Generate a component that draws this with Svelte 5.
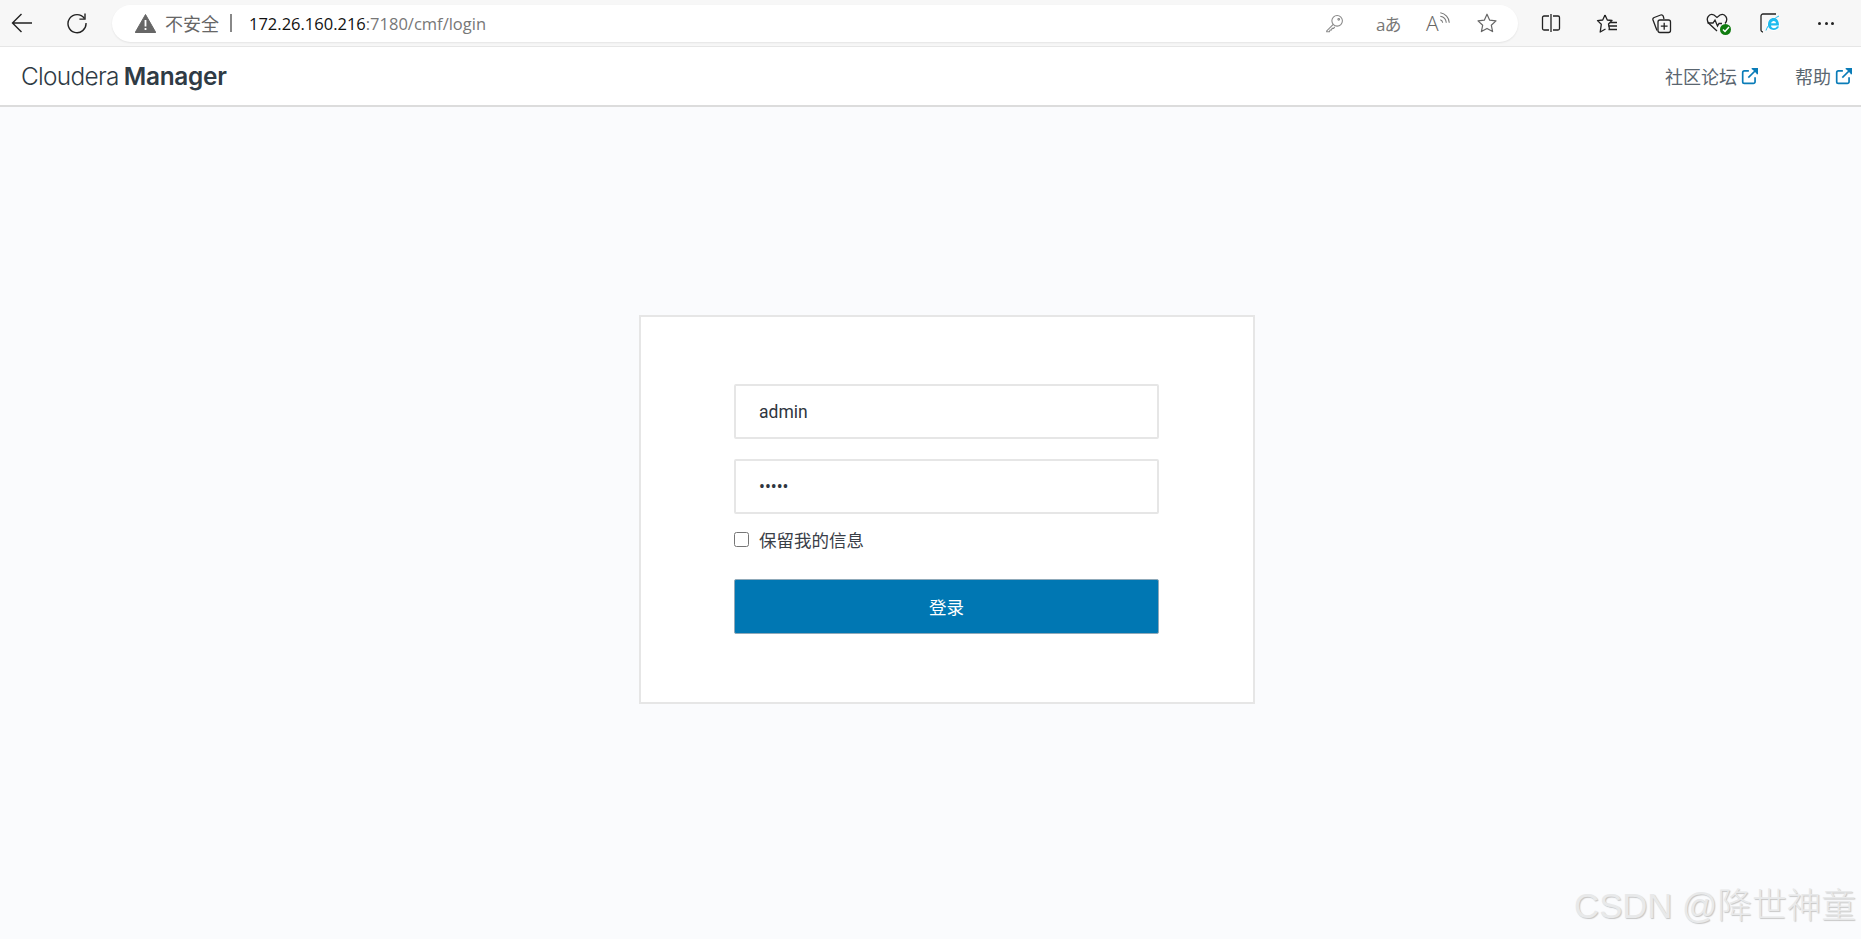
<script lang="ts">
  const links = [
    { label: "社区论坛" },
    { label: "帮助" }
  ];
</script>

<div class="page">
  <div class="browser-bar">
    <button class="nav-btn back" aria-label="back">
      <svg width="22" height="22" viewBox="0 0 22 22" fill="none" stroke="#222" stroke-width="1.4"><path d="M1.5 11H21M10.5 2 1.5 11l9 9" /></svg>
    </button>
    <button class="nav-btn reload" aria-label="reload">
      <svg width="22" height="22" viewBox="0 0 22 22" fill="none" stroke="#222" stroke-width="1.4"><path d="M18.4 6.5A9 9 0 1 0 20 11" /><path d="M19 1.5v5.6h-5.6" /></svg>
    </button>
    <div class="address">
      <svg class="warn" width="21" height="19" viewBox="0 0 21 19"><path d="M10.5 0.5 20.8 18.5H0.2Z" fill="#666" stroke="#666" stroke-linejoin="round" /><rect x="9.6" y="6" width="1.8" height="6.5" fill="#fff" /><rect x="9.6" y="14" width="1.8" height="2" fill="#fff" /></svg>
      <span class="insecure">不安全</span>
      <span class="sep"></span>
      <span class="url"><span class="host">172.26.160.216</span>:7180/cmf/login</span>
      <div class="addr-icons">
        <svg class="key" width="19" height="19" viewBox="0 0 18 18" fill="none" stroke="#888" stroke-width="1"><circle cx="11.5" cy="6.5" r="5" /><path d="M7.8 9.8 1.6 16v.9h2.6l.6-1.7h1.4l.5-1.6h1.5l1-1.4" /><circle cx="13" cy="5" r=".8" /></svg>
        <span class="translate">aあ</span>
        <span class="read">A<svg width="11" height="12" viewBox="0 0 9 10" fill="none" stroke="#777" stroke-width=".9"><path d="M1 6.5a3 3 0 0 1 2 2.500M1 3.500a6 6 0 0 1 5 5.500M1 .7a8.800 8.800 0 0 1 7.500 8.300" /></svg></span>
        <svg width="20" height="20" viewBox="0 0 20 20" fill="none" stroke="#666" stroke-width="1.2" stroke-linejoin="round"><path d="M10 1.200 12.700 7.200 19 7.900 14.300 12.200 15.600 18.600 10 15.400 4.400 18.600 5.700 12.200 1 7.900 7.300 7.200Z" /></svg>
      </div>
    </div>
    <div class="tools">
      <svg class="t-split" width="20" height="20" viewBox="0 0 20 20" fill="none" stroke="#222" stroke-width="1.300"><path d="M8 3H3a1.500 1.500 0 0 0-1.500 1.500v11A1.500 1.500 0 0 0 3 17h5M12 3h5a1.500 1.500 0 0 1 1.500 1.500v11A1.500 1.500 0 0 1 17 17h-5M10 1v18" /></svg>
      <svg class="t-fav" width="22" height="21" viewBox="0 0 22 21" fill="none" stroke="#222" stroke-width="1.300" stroke-linejoin="round"><path d="M9 2 11.300 7 16 7.500 12.500 11 13.500 16M9 2 6.700 7 1.500 7.600 5.300 11.300 4.200 19 9.500 16" /><path d="M14 9.500h7M12.500 13h8.500M12.500 16.500h8.500" /></svg>
      <svg class="t-coll" width="21" height="21" viewBox="0 0 21 21" fill="none" stroke="#222" stroke-width="1.300"><path d="M6 17.500 2 7a2 2 0 0 1 1.200-2.500l6.500-2.500a2 2 0 0 1 2.500 1L13 6" /><rect x="7" y="7" width="12.500" height="12.500" rx="2" /><path d="M13.200 9.800v7M9.800 13.200h6.800" /></svg>
      <div class="t-health">
        <svg width="22" height="20" viewBox="0 0 22 20" fill="none" stroke="#222" stroke-width="1.300"><path d="M11 18 3 10.500C-1 6 3-.5 8 2l3 2.500L14 2c5-2.500 9 4 5 8.500" /><path d="M1.500 10H7l2-3 2.500 6 1.500-2.500h3" /></svg>
        <span class="health-ok"><svg width="8" height="7" viewBox="0 0 8 7" fill="none" stroke="#fff" stroke-width="1.500"><path d="M1 3.500 3 5.500 7 1" /></svg></span>
      </div>
      <div class="t-ie">
        <svg width="22" height="22" viewBox="0 0 22 22" fill="none"><path d="M3 20H3a2 2 0 0 1-2-2V4a2 2 0 0 1 2-2h13" stroke="#222" stroke-width="1.300" /><circle cx="13.500" cy="12.500" r="6.500" fill="#fff" /><path d="M8 12.500c0-4 2.500-6.500 5.600-6.500 3.300 0 5.400 2.500 5.400 7.500h-8c.2 3.500 5 3.500 6 .8l2 .2c-1.200 4.500-11 5.200-11-2zm3-1.200h5c-.2-3-4.700-3-5 0z" fill="#1ebbee" /><path d="M6 18.500c1-4 7-12 13-14.500" stroke="#1ebbee" stroke-width="1" /></svg>
      </div>
      <div class="t-more"><i></i><i></i><i></i></div>
    </div>
  </div>

  <header class="app-header">
    <div class="brand">Cloudera <strong>Manager</strong></div>
    <nav class="links">
      {#each links as link}
        <a href="#top">
          {link.label}
          <svg width="18" height="18" viewBox="0 0 16 16" fill="none" stroke="#0a7cb8" stroke-width="1.500"><path d="M12.500 9v4a1.500 1.500 0 0 1-1.500 1.500H3A1.500 1.500 0 0 1 1.500 13V5A1.500 1.500 0 0 1 3 3.500h4" /><path d="M6.500 9.500 14 2" /><path d="M9.500 1.500h5v5" fill="#0a7cb8" stroke-width="1.200" /></svg>
        </a>
      {/each}
    </nav>
  </header>

  <main class="content">
    <form class="card" onsubmit={(e) => e.preventDefault()}>
      <input class="field" type="text" value="admin" />
      <input class="field second" type="password" value="admin" />
      <label class="remember">
        <input type="checkbox" />
        <span>保留我的信息</span>
      </label>
      <button class="submit" type="submit">登录</button>
    </form>
  </main>

  <div class="watermark">CSDN @降世神童</div>
</div>

<style>
  :global(body) {
    margin: 0;
    background: #fafbfd;
  }

  .page {
    position: relative;
    display: flex;
    flex-direction: column;
    height: 939px;
    overflow: hidden;
    font-family: Roboto, "Noto Sans CJK SC", sans-serif;
    color: #333;
  }

  .browser-bar {
    display: flex;
    align-items: center;
    flex-shrink: 0;
    height: 46px;
    background: #f7f7f7;
    border-bottom: 1px solid #e6e6e6;
    box-sizing: content-box;
  }

  .nav-btn {
    display: flex;
    padding: 0;
    border: 0;
    background: none;
  }

  .back {
    margin-left: 11px;
  }

  .reload {
    margin-left: 33px;
  }

  .address {
    display: flex;
    align-items: center;
    width: 1406px;
    height: 37px;
    margin-left: 24px;
    padding-left: 23px;
    box-sizing: border-box;
    border-radius: 19px;
    background: #fff;
    box-shadow: 0 1px 2px rgba(0, 0, 0, 0.08);
    font-family: "Open Sans", "Noto Sans CJK SC", sans-serif;
    font-size: 16px;
  }

  .insecure {
    margin-left: 9px;
    color: #666;
    font-size: 18px;
  }

  .sep {
    width: 2px;
    height: 18px;
    margin: 0 17px 0 11px;
    background: #888;
  }

  .url {
    color: #777;
    font-size: 16.5px;
  }

  .host {
    color: #111;
  }

  .addr-icons {
    display: flex;
    align-items: center;
    gap: 27px;
    margin-left: auto;
    padding-right: 21px;
  }

  .key {
    margin-right: 5px;
  }

  .translate {
    width: 23px;
    color: #777;
    font-size: 17px;
    letter-spacing: -1px;
    white-space: nowrap;
  }

  .read {
    display: flex;
    align-items: flex-start;
    width: 24px;
    color: #666;
    font-family: "Open Sans", sans-serif;
    font-size: 21px;
    font-weight: 300;
    line-height: 22px;
  }

  .tools {
    display: flex;
    align-items: center;
    margin-left: 23px;
  }

  .t-fav {
    margin-left: 35px;
  }

  .t-coll {
    margin-left: 33px;
  }

  .t-health {
    position: relative;
    display: flex;
    margin-left: 34px;
  }

  .health-ok {
    position: absolute;
    right: -3px;
    bottom: -2px;
    display: flex;
    align-items: center;
    justify-content: center;
    width: 11px;
    height: 11px;
    border-radius: 50%;
    background: #107c10;
  }

  .t-ie {
    display: flex;
    margin-left: 32px;
  }

  .t-more {
    display: flex;
    gap: 3.500px;
    margin-left: 36px;
  }

  .t-more i {
    width: 3px;
    height: 3px;
    border-radius: 50%;
    background: #222;
  }

  .app-header {
    display: flex;
    align-items: center;
    justify-content: space-between;
    flex-shrink: 0;
    height: 58px;
    padding: 0 8px 0 21px;
    background: #fff;
    border-bottom: 2px solid #dcdcdc;
  }

  .brand {
    color: #2f3b45;
    font-family: Inter, sans-serif;
    font-size: 24.4px;
    font-weight: 300;
    letter-spacing: -0.7px;
    word-spacing: -1px;
  }

  .brand strong {
    font-weight: 600;
    letter-spacing: -0.3px;
  }

  .links {
    display: flex;
    gap: 36px;
  }

  .links a {
    display: flex;
    align-items: center;
    gap: 4px;
    color: #5a6670;
    font-size: 18px;
    text-decoration: none;
  }

  .content {
    flex: 1;
    padding: 208px 0 0 639px;
  }

  .card {
    display: flex;
    flex-direction: column;
    width: 616px;
    height: 389px;
    padding: 67px 94px 0 93px;
    box-sizing: border-box;
    background: #fff;
    border: 2px solid #e6e6e6;
  }

  .field {
    width: 100%;
    height: 55px;
    padding: 0 23px;
    box-sizing: border-box;
    border: 2px solid #e6e6e6;
    border-radius: 2px;
    color: #2f3640;
    font-family: Roboto, sans-serif;
    font-size: 17.5px;
    outline: none;
  }

  .second {
    margin-top: 20px;
  }

  .remember {
    display: flex;
    align-items: center;
    gap: 10px;
    margin-top: 18px;
    height: 15px;
    color: #3a4048;
    font-size: 17.500px;
  }

  .remember input {
    width: 15px;
    height: 15px;
    margin: 0;
  }

  .submit {
    height: 55px;
    margin-top: 32px;
    border: 1px solid #8fa9b9;
    border-radius: 2px;
    background: #0077b3;
    color: #fff;
    font-family: Roboto, "Noto Sans CJK SC", sans-serif;
    font-size: 17.500px;
  }

  .watermark {
    position: absolute;
    right: 5px;
    bottom: 11px;
    color: #e8e9ea;
    font-family: "Liberation Sans", "Noto Sans CJK SC", sans-serif;
    font-size: 34.700px;
    font-weight: 300;
    line-height: 44px;
    text-shadow: 1px 1px 1px #c6c6c6;
  }
</style>
